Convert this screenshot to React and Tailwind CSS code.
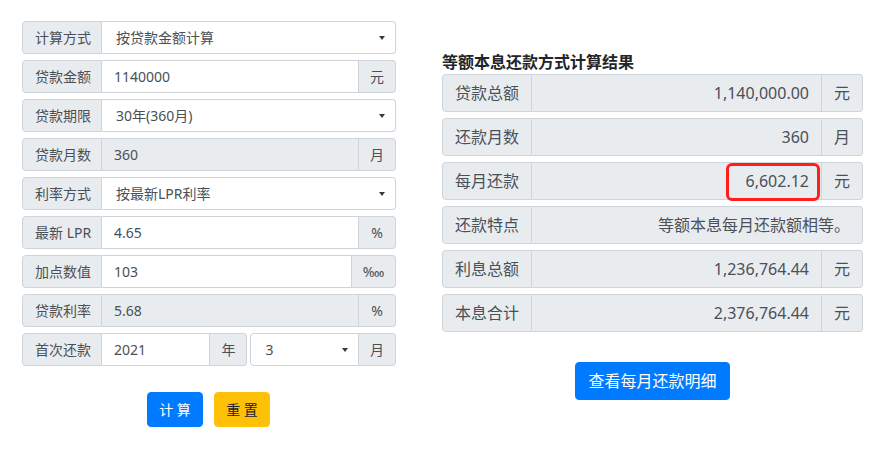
import React from "react";

const font = { fontFamily: '"Noto Sans", "Noto Sans CJK SC", sans-serif' };

const Arrow = () => (
  <svg width="6" height="4" viewBox="0 0 6 4" className="absolute right-[10px] top-1/2 -translate-y-1/2">
    <path d="M0 0 L6 0 L3 4 Z" fill="#343a40" />
  </svg>
);

const Label = ({ children, w = "w-[80px]" }) => (
  <div className={`${w} shrink-0 flex items-center px-3 bg-[#e9ecef] border border-[#ced4da] rounded-l-[4px] text-[#495057] whitespace-nowrap`}>
    {children}
  </div>
);

const Addon = ({ children, w = "w-[37px]", last = true }) => (
  <div className={`${w} shrink-0 flex items-center justify-center bg-[#e9ecef] border border-l-0 border-[#ced4da] ${last ? "rounded-r-[4px]" : ""} text-[#495057]`}>
    {children}
  </div>
);

const LeftRow = ({ label, value, addon, addonW, select, gray }) => (
  <div className="flex h-[33px] text-[14px] leading-[21px]">
    <Label>{label}</Label>
    <div
      className={`relative flex-1 flex items-center border border-l-0 border-[#ced4da] ${gray ? "bg-[#e9ecef]" : "bg-white"} ${addon ? "" : "rounded-r-[4px]"} ${select ? "pl-[14px]" : "pl-3"} text-[#495057]`}
    >
      {value}
      {select && <Arrow />}
    </div>
    {addon && <Addon w={addonW}>{addon}</Addon>}
  </div>
);

const RightRow = ({ label, value, addon, children }) => (
  <div className="flex h-[38px] text-[16px] leading-6">
    <Label w="w-[90px]">{label}</Label>
    <div
      className={`relative flex-1 flex items-center justify-end px-3 bg-[#e9ecef] border border-l-0 border-[#ced4da] ${addon ? "" : "rounded-r-[4px]"} text-[#495057]`}
    >
      {value}
      {children}
    </div>
    {addon && <Addon w="w-[41px]">{addon}</Addon>}
  </div>
);

export default function App() {
  return (
    <div className="w-[882px] h-[452px] bg-white" style={font}>
      <div className="flex pt-[21px] pl-[22px]">
        {/* left form */}
        <div className="w-[374px] flex flex-col">
          <div className="flex flex-col gap-[6px]">
            <LeftRow label="计算方式" value="按贷款金额计算" select />
            <LeftRow label="贷款金额" value="1140000" addon="元" />
            <LeftRow label="贷款期限" value="30年(360月)" select />
            <LeftRow label="贷款月数" value="360" addon="月" gray />
            <LeftRow label="利率方式" value="按最新LPR利率" select />
            <LeftRow label="最新 LPR" value="4.65" addon="%" />
            <LeftRow label="加点数值" value="103" addon="‱" addonW="w-[44px]" />
            <LeftRow label="贷款利率" value="5.68" addon="%" gray />
            <div className="flex h-[33px] text-[14px] leading-[21px]">
              <Label>首次还款</Label>
              <div className="w-[109px] flex items-center pl-3 border border-l-0 border-[#ced4da] bg-white text-[#495057]">
                2021
              </div>
              <Addon last>年</Addon>
              <div className="relative w-[109px] ml-[3px] flex items-center pl-[14px] border border-[#ced4da] rounded-l-[4px] bg-white text-[#495057]">
                3
                <Arrow />
              </div>
              <Addon>月</Addon>
            </div>
          </div>
          <div className="flex gap-[11px] mt-[26px] pl-[125px]">
            <button className="w-[56px] h-[35px] flex items-center justify-center bg-[#007bff] border border-[#007bff] rounded-[4px] text-white text-[14px] leading-[21px]">
              计 算
            </button>
            <button className="w-[56px] h-[35px] flex items-center justify-center bg-[#ffc107] border border-[#ffc107] rounded-[4px] text-[#212529] text-[14px] leading-[21px]">
              重 置
            </button>
          </div>
        </div>

        {/* right results */}
        <div className="w-[421px] ml-[46px] pt-[29px] flex flex-col">
          <div className="h-6 leading-6 text-[16px] font-bold text-[#212529]">等额本息还款方式计算结果</div>
          <div className="flex flex-col gap-[6px]">
            <RightRow label="贷款总额" value="1,140,000.00" addon="元" />
            <RightRow label="还款月数" value="360" addon="月" />
            <RightRow label="每月还款" value="6,602.12" addon="元">
              <div className="absolute right-[1px] top-0 w-[94px] h-[38px] border-[3px] border-[#ff1e1e] rounded-[6px]" />
            </RightRow>
            <RightRow label="还款特点" value="等额本息每月还款额相等。" />
            <RightRow label="利息总额" value="1,236,764.44" addon="元" />
            <RightRow label="本息合计" value="2,376,764.44" addon="元" />
          </div>
          <div className="flex justify-center mt-[30px]">
            <button className="h-[38px] px-3 bg-[#007bff] border border-[#007bff] rounded-[4px] text-white text-[16px] leading-6">
              查看每月还款明细
            </button>
          </div>
        </div>
      </div>
    </div>
  );
}
